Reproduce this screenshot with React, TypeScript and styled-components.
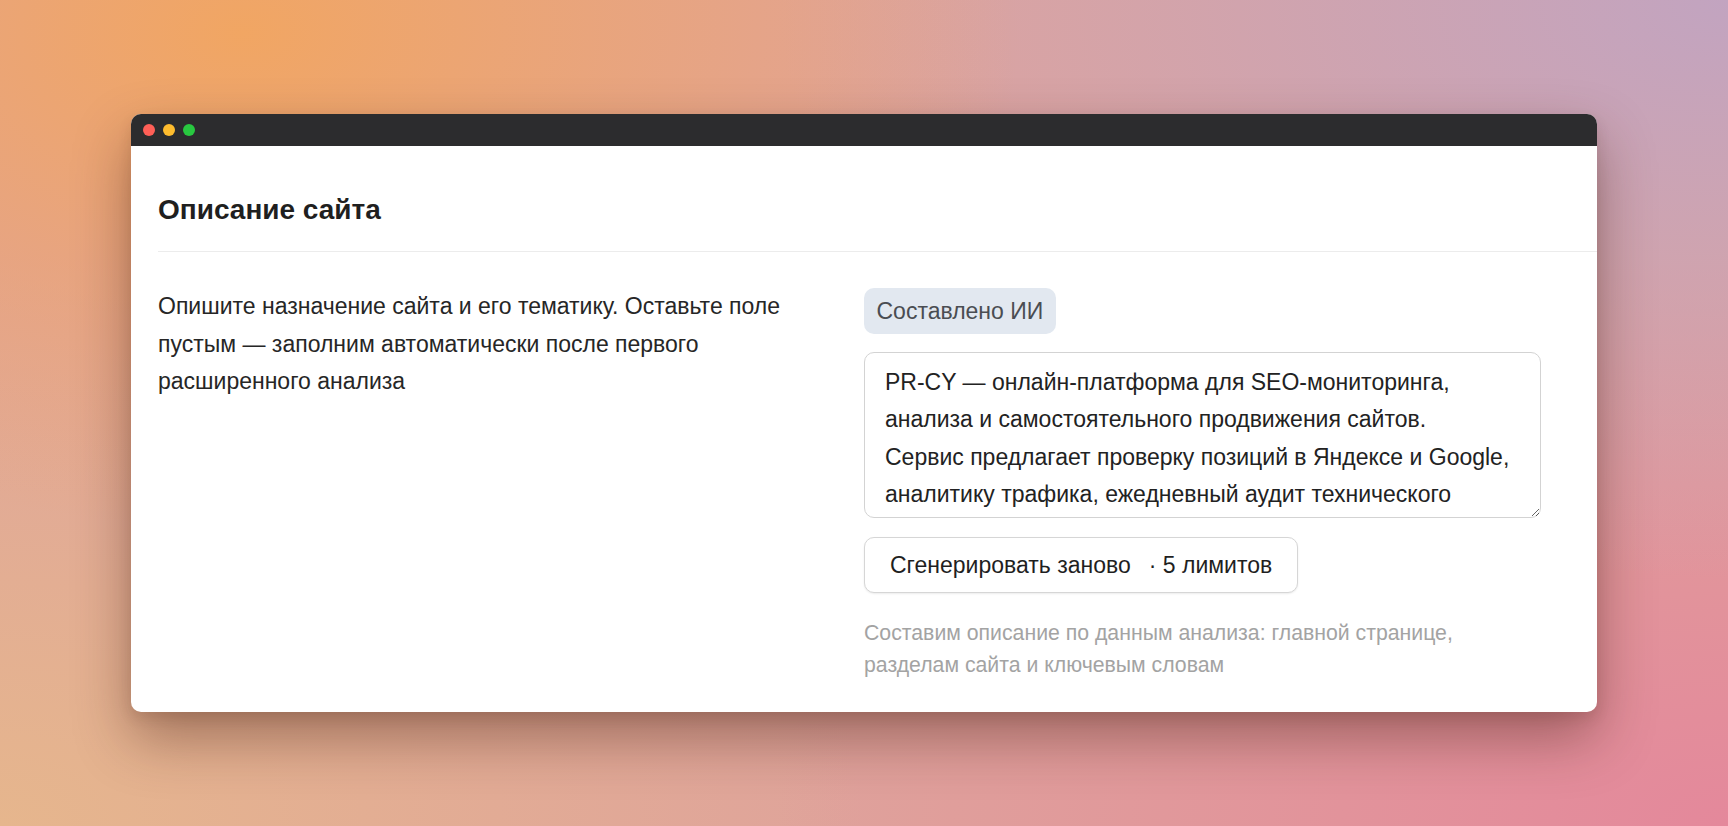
import React from "react";
import styled, { createGlobalStyle } from "styled-components";

const GlobalStyle = createGlobalStyle`
  html, body {
    margin: 0;
    padding: 0;
  }
  body {
    font-family: "Liberation Sans", Arial, Helvetica, sans-serif;
    -webkit-font-smoothing: antialiased;
  }
  * {
    box-sizing: border-box;
  }
`;

const Backdrop = styled.div`
  min-height: 100vh;
  display: flex;
  align-items: center;
  justify-content: center;
  background:
    radial-gradient(ellipse 45% 60% at 14% 4%, rgba(242, 166, 96, 0.95) 0%, rgba(242, 166, 96, 0) 100%),
    radial-gradient(ellipse 55% 70% at 100% 0%, #c2a4c0 0%, rgba(194, 164, 192, 0) 100%),
    radial-gradient(ellipse 55% 70% at 100% 100%, #e4889b 0%, rgba(228, 136, 155, 0) 100%),
    radial-gradient(ellipse 50% 70% at 0% 100%, #e6b68d 0%, rgba(230, 182, 141, 0) 100%),
    #dfa39b;
`;

const Window = styled.div`
  width: 1466px;
  background: #ffffff;
  border-radius: 10px;
  overflow: hidden;
  box-shadow: 0 26px 56px rgba(70, 30, 20, 0.42), 0 6px 14px rgba(70, 30, 20, 0.12);
`;

const TitleBar = styled.div`
  height: 32px;
  background: #2c2c2e;
  display: flex;
  align-items: center;
  gap: 8px;
  padding-left: 12px;
`;

const Light = styled.span<{ $color: string }>`
  width: 12px;
  height: 12px;
  border-radius: 50%;
  background: ${(p) => p.$color};
`;

const Header = styled.div`
  margin-left: 27px;
  padding: 50px 0 26px;
  border-bottom: 1px solid #ececec;
`;

const Title = styled.h2`
  margin: 0;
  font-size: 28px;
  line-height: 28.75px;
  font-weight: 700;
  color: #1f1f1f;
`;

const Body = styled.div`
  display: grid;
  grid-template-columns: 1fr 1fr;
  padding: 36.25px 27px 31px;
`;

const Lead = styled.p`
  margin: 0;
  padding-right: 40px;
  font-size: 23px;
  line-height: 37.5px;
  color: #262626;
`;

const Field = styled.div`
  display: flex;
  flex-direction: column;
  align-items: flex-start;
  max-width: 677px;
`;

const Badge = styled.span`
  display: inline-block;
  padding: 10px 12.5px;
  border-radius: 10px;
  background: #e2e8f0;
  color: #4a4d52;
  font-size: 23px;
  line-height: 26px;
`;

const TextArea = styled.textarea`
  margin-top: 17.5px;
  width: 677px;
  height: 166px;
  padding: 11px 20px 6px;
  border: 1px solid #d3d3d3;
  border-radius: 10px;
  font-family: "Liberation Sans", Arial, Helvetica, sans-serif;
  font-size: 23px;
  line-height: 37.5px;
  color: #222222;
  background: #ffffff;
  overflow: hidden;
  resize: vertical;
  outline: none;
`;

const Button = styled.button`
  margin-top: 19px;
  padding: 14px 25px;
  border: 1px solid #d6d6d6;
  border-radius: 10px;
  background: #ffffff;
  box-shadow: 0 1px 2px rgba(0, 0, 0, 0.08);
  font-family: "Liberation Sans", Arial, Helvetica, sans-serif;
  font-size: 23px;
  line-height: 26px;
  color: #1f1f1f;
  cursor: pointer;
`;

const Cost = styled.span`
  margin-left: 18px;
`;

const Hint = styled.p`
  margin: 25.5px 0 0;
  font-size: 21.25px;
  line-height: 31.25px;
  color: #a3a3a3;
`;

const description =
  "PR-CY — онлайн-платформа для SEO-мониторинга, анализа и самостоятельного продвижения сайтов.\nСервис предлагает проверку позиций в Яндексе и Google, аналитику трафика, ежедневный аудит технического состояния сайта и рекомендации по оптимизации.";

export default function App() {
  return (
    <>
      <GlobalStyle />
      <Backdrop>
        <Window>
          <TitleBar>
            <Light $color="#ff5f57" />
            <Light $color="#febc2e" />
            <Light $color="#28c840" />
          </TitleBar>
          <Header>
            <Title>Описание сайта</Title>
          </Header>
          <Body>
            <Lead>
              Опишите назначение сайта и его тематику. Оставьте поле пустым — заполним
              автоматически после первого расширенного анализа
            </Lead>
            <Field>
              <Badge>Составлено ИИ</Badge>
              <TextArea defaultValue={description} spellCheck={false} />
              <Button type="button">
                Сгенерировать заново<Cost>· 5 лимитов</Cost>
              </Button>
              <Hint>
                Составим описание по данным анализа: главной странице, разделам сайта и
                ключевым словам
              </Hint>
            </Field>
          </Body>
        </Window>
      </Backdrop>
    </>
  );
}
